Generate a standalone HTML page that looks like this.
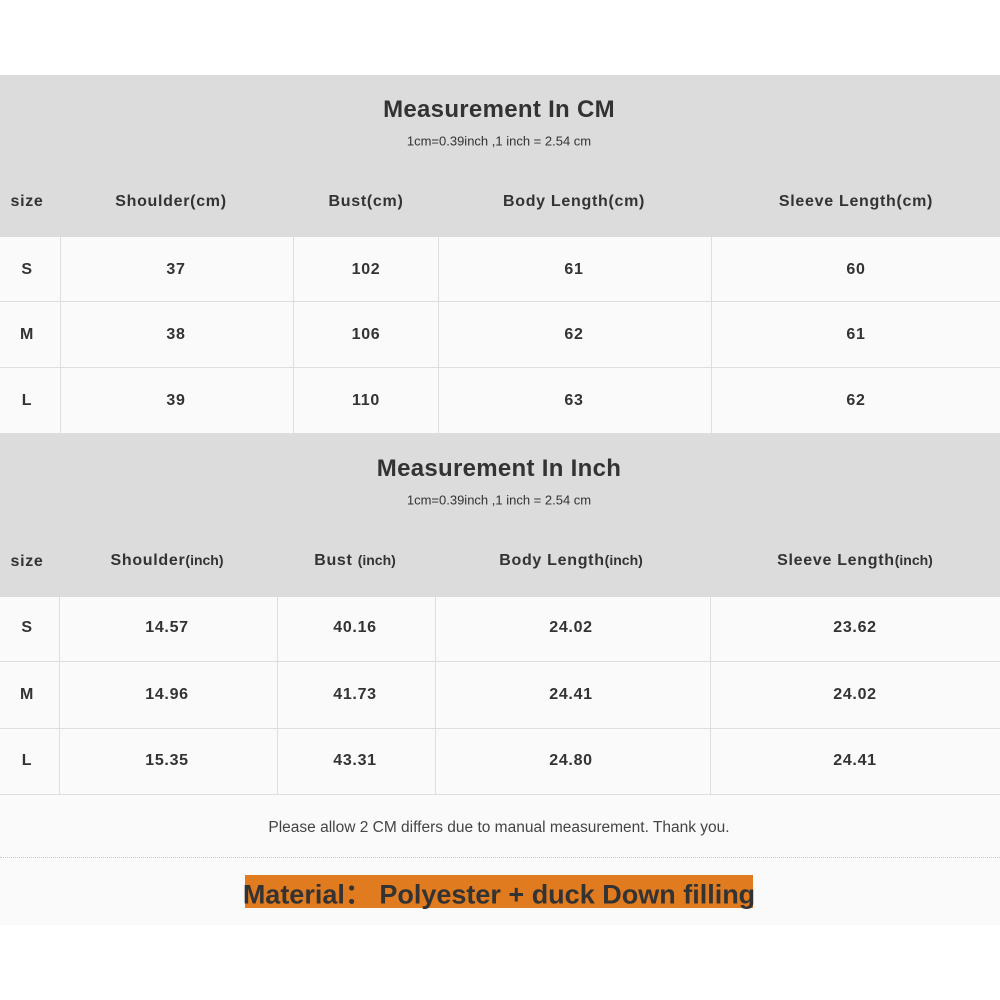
<!DOCTYPE html>
<html><head><style>
body{margin:0;width:1000px;height:1000px;background:#fff;position:relative;font-family:"Liberation Sans","DejaVu Sans",sans-serif;color:#333;overflow:hidden}
.g{position:absolute;left:0;width:1000px;background:#dcdcdc}
.r{position:absolute;left:0;width:1000px;background:#fafafa;border-bottom:1px solid #dedede;box-sizing:border-box}
.t{position:absolute;transform:translate(-50%,-50%);white-space:nowrap;font-weight:bold}
.h{font-size:16px;letter-spacing:0.7px}
.v{position:absolute;width:1px;background:#dedede}
.s{font-weight:normal;font-size:13px}
</style></head><body>
<div class="g" style="top:75px;height:162px"></div>
<div class="t" style="left:499px;top:110px;font-size:24px;letter-spacing:0.3px">Measurement In CM</div>
<div class="t s" style="left:499px;top:141px">1cm=0.39inch ,1 inch = 2.54 cm</div>
<div class="t h" style="left:27px;top:202px">size</div>
<div class="t h" style="left:171px;top:202px">Shoulder(cm)</div>
<div class="t h" style="left:366px;top:202px">Bust(cm)</div>
<div class="t h" style="left:574px;top:202px">Body Length(cm)</div>
<div class="t h" style="left:856px;top:202px">Sleeve Length(cm)</div>
<div class="r" style="top:237px;height:65px"></div>
<div class="r" style="top:302px;height:66px"></div>
<div class="r" style="top:368px;height:66px"></div>
<div class="v" style="left:60px;top:237px;height:196px"></div>
<div class="v" style="left:293px;top:237px;height:196px"></div>
<div class="v" style="left:438px;top:237px;height:196px"></div>
<div class="v" style="left:711px;top:237px;height:196px"></div>
<div class="t h" style="left:27px;top:270px">S</div><div class="t h" style="left:176px;top:270px">37</div><div class="t h" style="left:366px;top:270px">102</div><div class="t h" style="left:574px;top:270px">61</div><div class="t h" style="left:856px;top:270px">60</div>
<div class="t h" style="left:27px;top:335px">M</div><div class="t h" style="left:176px;top:335px">38</div><div class="t h" style="left:366px;top:335px">106</div><div class="t h" style="left:574px;top:335px">62</div><div class="t h" style="left:856px;top:335px">61</div>
<div class="t h" style="left:27px;top:401px">L</div><div class="t h" style="left:176px;top:401px">39</div><div class="t h" style="left:366px;top:401px">110</div><div class="t h" style="left:574px;top:401px">63</div><div class="t h" style="left:856px;top:401px">62</div>

<div class="g" style="top:434px;height:163px"></div>
<div class="t" style="left:499px;top:469px;font-size:24px;letter-spacing:0.3px">Measurement In Inch</div>
<div class="t s" style="left:499px;top:500px">1cm=0.39inch ,1 inch = 2.54 cm</div>
<div class="t h" style="left:27px;top:562px">size</div>
<div class="t h" style="left:167px;top:561px">Shoulder<span style="font-size:14px;letter-spacing:0">(inch)</span></div>
<div class="t h" style="left:355px;top:561px">Bust <span style="font-size:14px;letter-spacing:0">(inch)</span></div>
<div class="t h" style="left:571px;top:561px">Body Length<span style="font-size:14px;letter-spacing:0">(inch)</span></div>
<div class="t h" style="left:855px;top:561px">Sleeve Length<span style="font-size:14px;letter-spacing:0">(inch)</span></div>
<div class="r" style="top:597px;height:65px"></div>
<div class="r" style="top:662px;height:67px"></div>
<div class="r" style="top:729px;height:66px"></div>
<div class="v" style="left:59px;top:597px;height:197px"></div>
<div class="v" style="left:277px;top:597px;height:197px"></div>
<div class="v" style="left:435px;top:597px;height:197px"></div>
<div class="v" style="left:710px;top:597px;height:197px"></div>
<div class="t h" style="left:27px;top:628px">S</div><div class="t h" style="left:167px;top:628px">14.57</div><div class="t h" style="left:355px;top:628px">40.16</div><div class="t h" style="left:571px;top:628px">24.02</div><div class="t h" style="left:855px;top:628px">23.62</div>
<div class="t h" style="left:27px;top:695px">M</div><div class="t h" style="left:167px;top:695px">14.96</div><div class="t h" style="left:355px;top:695px">41.73</div><div class="t h" style="left:571px;top:695px">24.41</div><div class="t h" style="left:855px;top:695px">24.02</div>
<div class="t h" style="left:27px;top:761px">L</div><div class="t h" style="left:167px;top:761px">15.35</div><div class="t h" style="left:355px;top:761px">43.31</div><div class="t h" style="left:571px;top:761px">24.80</div><div class="t h" style="left:855px;top:761px">24.41</div>

<div style="position:absolute;left:0;top:795px;width:1000px;height:130px;background:#fafafa"></div>
<div style="position:absolute;left:0;top:857px;width:1000px;border-top:1px dotted #ccc"></div>
<div class="t" style="left:499px;top:828px;font-size:15.5px;font-weight:normal;color:#444">Please allow 2 CM differs due to manual measurement. Thank you.</div>
<div style="position:absolute;left:245px;top:875px;width:508px;height:33px;background:#e07b1f"></div>
<div class="t" style="left:499px;top:892px;font-size:27px;color:#333">Material： Polyester + duck Down filling</div>
</body></html>
